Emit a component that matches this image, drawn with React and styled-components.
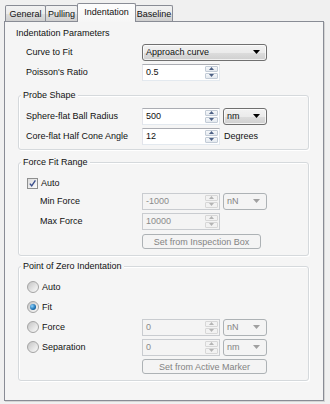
import styled, { createGlobalStyle } from 'styled-components'

const GlobalStyle = createGlobalStyle`
  html, body {
    margin: 0;
    padding: 0;
    background: #f0f0f0;
  }

  body {
    font-family: "Liberation Sans", Arial, sans-serif;
    font-size: 9px;
    color: #111;
  }
`

const Window = styled.div`
  width: 330px;
  height: 404px;
  box-sizing: border-box;
  padding: 3px 6px 0 4px;
`

const TabBar = styled.div`
  position: relative;
  z-index: 1;
  display: flex;
  align-items: flex-start;
  height: 19px;
  padding-left: 1px;
`

const Tab = styled.div`
  box-sizing: border-box;
  width: ${(p) => p.$w}px;
  height: ${(p) => (p.$active ? 19 : 16)}px;
  margin-top: ${(p) => (p.$active ? 0 : 2)}px;
  margin-left: ${(p) => (p.$first ? 0 : -1)}px;
  display: flex;
  align-items: center;
  justify-content: center;
  padding-bottom: ${(p) => (p.$active ? 2 : 0)}px;
  border: 1px solid #898c95;
  border-bottom: none;
  border-radius: 2px 2px 0 0;
  background: ${(p) => (p.$active
    ? 'linear-gradient(#fdfdfd, #f6f6f6)'
    : 'linear-gradient(#f2f2f2, #ebebeb 50%, #dddddd 51%, #cfcfcf)')};
  position: relative;
  z-index: ${(p) => (p.$active ? 2 : 1)};
`

const Pane = styled.div`
  box-sizing: border-box;
  height: 380px;
  margin-top: -1px;
  padding: 0 14px 0 11px;
  border: 1px solid #898c95;
  background: #f5f5f5;
  box-shadow: 1px 1px 0 #d4d4d4;
`

const Header = styled.div`
  margin-top: 4px;
  line-height: 14px;
  height: 14px;
`

const Rows = styled.div`
  display: flex;
  flex-direction: column;
  gap: 2px;
  margin-top: ${(p) => p.$mt || 0}px;
  padding-left: ${(p) => p.$indent || 0}px;
`

const Row = styled.div`
  display: flex;
  align-items: center;
  height: ${(p) => p.$h || 18}px;
  margin-top: ${(p) => p.$mt || 0}px;
`

const Label = styled.div`
  box-sizing: border-box;
  flex: 0 0 116px;
  padding-left: ${(p) => p.$indent || 0}px;
  display: flex;
  align-items: center;
  gap: 3px;
  white-space: nowrap;
`

const Group = styled.div`
  position: relative;
  margin: ${(p) => p.$mt}px 0 0 2px;
  padding: ${(p) => p.$pt}px 0 ${(p) => p.$pb}px 7px;
  border: 1px solid #d5d9dc;
  border-radius: 3px;
  box-shadow: inset 1px 1px 0 #fff, 1px 1px 0 #fff;
`

const GroupTitle = styled.div`
  position: absolute;
  top: -7px;
  left: 2px;
  padding: 0 2px;
  line-height: 13px;
  background: #f5f5f5;
`

const SpinBox = styled.div`
  box-sizing: border-box;
  width: 78px;
  height: 17px;
  display: flex;
  border: 1px solid;
  border-color: ${(p) => (p.$disabled ? '#c9ccd0' : '#abadb3 #e3e9ef #e3e9ef #e2e3ea')};
  background: ${(p) => (p.$disabled ? '#f4f4f4' : '#fff')};
  color: ${(p) => (p.$disabled ? '#8a8a8a' : '#111')};
`

const SpinText = styled.div`
  flex: 1;
  display: flex;
  align-items: center;
  padding-left: 3px;
`

const SpinButtons = styled.div`
  width: 13px;
  display: flex;
  flex-direction: column;
  gap: 1px;
  padding: 1px 1px 1px 0;
`

const SpinButton = styled.div`
  flex: 1;
  display: flex;
  align-items: center;
  justify-content: center;
  border: 1px solid ${(p) => (p.$disabled ? '#d7d7d7' : '#c2cbd6')};
  border-radius: 1px;
  background: ${(p) => (p.$disabled ? '#f2f2f2' : 'linear-gradient(#f6f8fa, #e4e9ef)')};
`

const Combo = styled.div`
  box-sizing: border-box;
  width: ${(p) => p.$w}px;
  height: 17px;
  margin-left: ${(p) => p.$ml || 0}px;
  display: flex;
  align-items: center;
  justify-content: space-between;
  padding: 0 6px 0 3px;
  border: 1px solid ${(p) => (p.$disabled ? '#adb2b5' : '#707070')};
  border-radius: 3px;
  background: ${(p) => (p.$disabled
    ? '#f4f4f4'
    : 'linear-gradient(#f2f2f2, #ebebeb 50%, #dddddd 51%, #cfcfcf)')};
  color: ${(p) => (p.$disabled ? '#838383' : '#111')};
  box-shadow: ${(p) => (p.$disabled ? 'none' : 'inset 0 0 0 1px rgba(255,255,255,0.7)')};
`

const Suffix = styled.span`
  margin-left: 4px;
`

const Button = styled.div`
  box-sizing: border-box;
  width: ${(p) => p.$w}px;
  height: 15px;
  display: flex;
  align-items: center;
  justify-content: center;
  border: 1px solid #adb2b5;
  border-radius: 3px;
  background: #f4f4f4;
  color: #838383;
`

const Box = styled.span`
  box-sizing: border-box;
  width: 11px;
  height: 11px;
  display: inline-flex;
  align-items: center;
  justify-content: center;
  margin-left: 1px;
  border: 1px solid #8e8f8f;
  background: linear-gradient(135deg, #dcdcdc, #fcfcfc);
`

const Radio = styled.span`
  box-sizing: border-box;
  width: 12px;
  height: 12px;
  display: inline-flex;
  align-items: center;
  justify-content: center;
  margin-left: 1px;
  border: 1px solid #a4a4a4;
  border-radius: 50%;
  background: linear-gradient(135deg, #c4c4c4, #ececec 70%, #f6f6f6);

  &::after {
    content: '';
    display: ${(p) => (p.$checked ? 'block' : 'none')};
    width: 6px;
    height: 6px;
    border-radius: 50%;
    background: radial-gradient(circle at 35% 35%, #8fd4ff, #1a6fb0 60%, #0d3f6e);
  }
`

const Arrow = ({ up, color }) => (
  <svg width="5" height="3" viewBox="0 0 5 3">
    <path d={up ? 'M0 3 L2.5 0 L5 3 Z' : 'M0 0 L5 0 L2.5 3 Z'} fill={color} />
  </svg>
)

const DropArrow = ({ color }) => (
  <svg width="7" height="4" viewBox="0 0 7 4">
    <path d="M0 0 L7 0 L3.5 4 Z" fill={color} />
  </svg>
)

const Spin = ({ value, disabled }) => {
  const color = disabled ? '#b4b4b4' : '#4d6185'
  return (
    <SpinBox $disabled={disabled}>
      <SpinText>{value}</SpinText>
      <SpinButtons>
        <SpinButton $disabled={disabled}><Arrow up color={color} /></SpinButton>
        <SpinButton $disabled={disabled}><Arrow color={color} /></SpinButton>
      </SpinButtons>
    </SpinBox>
  )
}

const Select = ({ value, width, disabled, ml }) => (
  <Combo $w={width} $disabled={disabled} $ml={ml}>
    <span>{value}</span>
    <DropArrow color={disabled ? '#a0a0a0' : '#000'} />
  </Combo>
)

const Check = () => (
  <Box>
    <svg width="9" height="9" viewBox="0 0 9 9">
      <path d="M1.8 4.6 L3.7 6.8 L7.4 1.4" fill="none" stroke="#3b4f8c" strokeWidth="1.4" />
    </svg>
  </Box>
)

const tabs = [
  { name: 'General', w: 41 },
  { name: 'Pulling', w: 33 },
  { name: 'Indentation', w: 59, active: true },
  { name: 'Baseline', w: 38 },
]

const App = () => (
  <>
    <GlobalStyle />
    <Window>
      <TabBar>
        {tabs.map((t, i) => (
          <Tab key={t.name} $w={t.w} $active={t.active} $first={i === 0}>
            {t.name}
          </Tab>
        ))}
      </TabBar>
      <Pane>
        <Header>Indentation Parameters</Header>
        <Rows $mt={3} $indent={10}>
          <Row>
            <Label>Curve to Fit</Label>
            <Select value="Approach curve" width={125} />
          </Row>
          <Row>
            <Label>Poisson&apos;s Ratio</Label>
            <Spin value="0.5" />
          </Row>
        </Rows>

        <Group $mt={14} $pt={11} $pb={4}>
          <GroupTitle>Probe Shape</GroupTitle>
          <Rows>
            <Row>
              <Label>Sphere-flat Ball Radius</Label>
              <Spin value="500" />
              <Select value="nm" width={44} ml={3} />
            </Row>
            <Row>
              <Label>Core-flat Half Cone Angle</Label>
              <Spin value="12" />
              <Suffix>Degrees</Suffix>
            </Row>
          </Rows>
        </Group>

        <Group $mt={12} $pt={13} $pb={6}>
          <GroupTitle>Force Fit Range</GroupTitle>
          <Rows>
            <Row $h={14}>
              <Label><Check />Auto</Label>
            </Row>
            <Row>
              <Label $indent={14}>Min Force</Label>
              <Spin value="-1000" disabled />
              <Select value="nN" width={44} ml={3} disabled />
            </Row>
            <Row>
              <Label $indent={14}>Max Force</Label>
              <Spin value="10000" disabled />
            </Row>
            <Row $h={15} $mt={2}>
              <Label />
              <Button $w={119}>Set from Inspection Box</Button>
            </Row>
          </Rows>
        </Group>

        <Group $mt={10} $pt={11} $pb={6}>
          <GroupTitle>Point of Zero Indentation</GroupTitle>
          <Rows>
            <Row>
              <Label><Radio />Auto</Label>
            </Row>
            <Row>
              <Label><Radio $checked />Fit</Label>
            </Row>
            <Row>
              <Label><Radio />Force</Label>
              <Spin value="0" disabled />
              <Select value="nN" width={44} ml={3} disabled />
            </Row>
            <Row>
              <Label><Radio />Separation</Label>
              <Spin value="0" disabled />
              <Select value="nm" width={44} ml={3} disabled />
            </Row>
            <Row $h={15} $mt={1}>
              <Label />
              <Button $w={125}>Set from Active Marker</Button>
            </Row>
          </Rows>
        </Group>
      </Pane>
    </Window>
  </>
)

export default App
